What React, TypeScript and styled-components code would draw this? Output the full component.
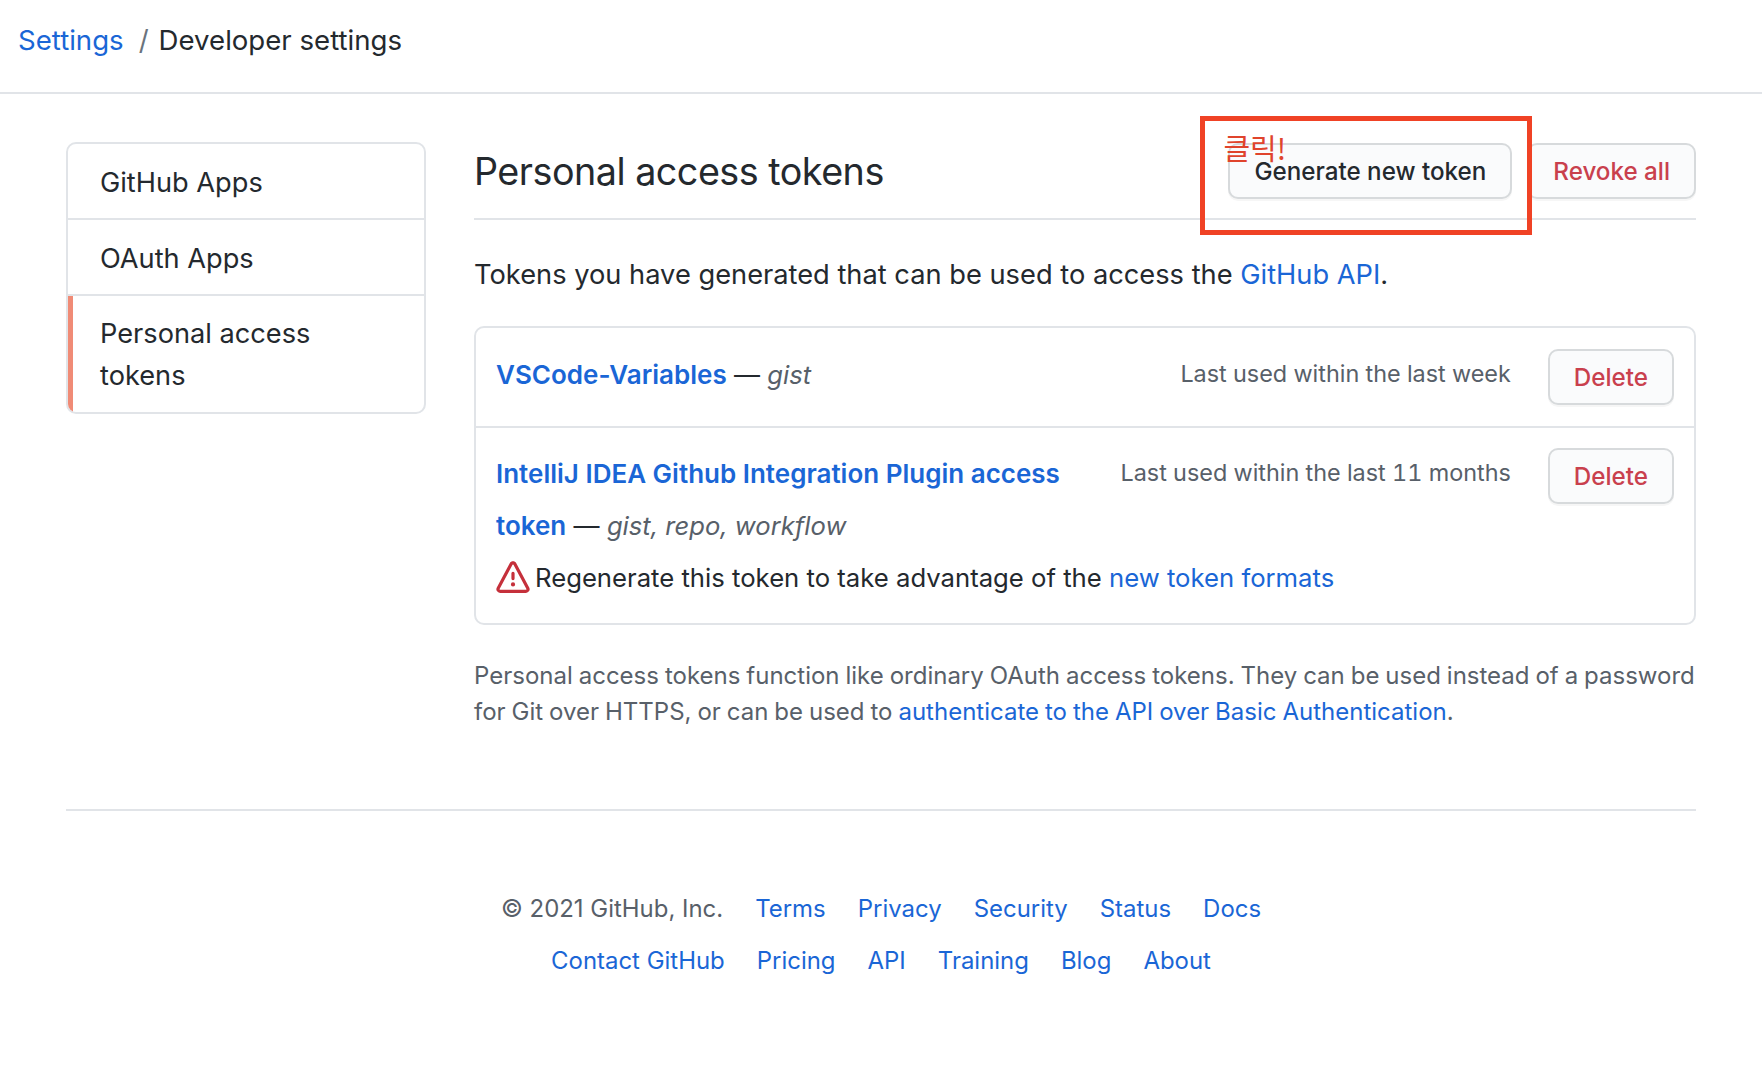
import React from "react";
import styled, { createGlobalStyle } from "styled-components";

const GlobalStyle = createGlobalStyle`
    html, body {
        margin: 0;
        padding: 0;
        background: #fff;
        color: #24292e;
        font-family: Inter, "Liberation Sans", "Noto Sans CJK KR", sans-serif;
        font-size: 25px;
    }
    a {
        color: #1a66d6;
        text-decoration: none;
    }
`;

const TopBar = styled.header`
    height: 94px;
    box-sizing: border-box;
    border-bottom: 2px solid #e1e4e8;
    padding: 0 18px 13px;
    display: flex;
    align-items: center;
    font-size: 27.6px;
`;

const Divider = styled.span`
    color: #6a737d;
    margin: 0 10px 0 15px;
`;

const Layout = styled.div`
    width: 1630px;
    margin: 48px 0 0 66px;
    display: flex;
    gap: 48px;
    align-items: flex-start;
`;

const SideMenu = styled.nav`
    width: 360px;
    flex-shrink: 0;
    box-sizing: border-box;
    border: 2px solid #e1e4e8;
    border-radius: 10px;
    overflow: hidden;
`;

const MenuItem = styled.div<{ $active?: boolean }>`
    padding: ${(p) => (p.$active ? "17px 32px 15px 27px" : "18px 32px 14px 32px")};
    line-height: 42px;
    font-size: 27.2px;
    border-bottom: 2px solid #e1e4e8;
    border-left: ${(p) => (p.$active ? "5px solid #f08b76" : "0")};
    &:last-child {
        border-bottom: 0;
    }
`;

const Main = styled.main`
    flex: 1;
    min-width: 0;
`;

const SectionHead = styled.div`
    display: flex;
    align-items: center;
    justify-content: space-between;
    box-sizing: border-box;
    height: 78px;
    border-bottom: 2px solid #e1e4e8;
    padding-bottom: 18px;
`;

const Title = styled.h2`
    margin: 0;
    font-size: 37.7px;
    font-weight: 400;
    letter-spacing: -0.5px;
`;

const HeadActions = styled.div`
    display: flex;
    gap: 15px;
    position: relative;
`;

const Button = styled.button<{ $danger?: boolean }>`
    height: 56px;
    padding: 0 24px;
    font: 500 24.2px Inter, "Liberation Sans", sans-serif;
    color: ${(p) => (p.$danger ? "#c9404d" : "#24292e")};
    background: #fafbfc;
    border: 2px solid #d7dadc;
    border-radius: 10px;
    box-shadow: 0 2px 0 rgba(27, 31, 35, 0.04);
`;

const DeleteButton = styled(Button)`
    float: right;
`;

const Callout = styled.div`
    position: absolute;
    left: -28px;
    top: -27px;
    width: 332px;
    height: 119px;
    box-sizing: border-box;
    border: 5px solid #f04225;
`;

const CalloutLabel = styled.span`
    position: absolute;
    left: 18px;
    top: 5px;
    color: #e0442c;
    font: 29px "Noto Sans CJK KR", sans-serif;
`;

const Intro = styled.p`
    margin: 34px 0 30px;
    font-size: 27.25px;
    line-height: 42px;
`;

const TokenBox = styled.div`
    border: 2px solid #e1e4e8;
    border-radius: 10px;
`;

const TokenRow = styled.div`
    display: flow-root;
    padding: 21px 20px;
    border-bottom: 2px solid #e1e4e8;
    & + & {
        padding-top: 20px;
    }
    &:last-child {
        border-bottom: 0;
    }
`;

const TokenInfo = styled.div`
    margin-bottom: -2px;
    font-size: 26px;
    line-height: 52px;
`;

const TokenName = styled.a`
    font-weight: 600;
`;

const Scopes = styled.em`
    color: #586069;
    font-size: 25.6px;
`;

const LastUsed = styled.span`
    float: right;
    white-space: nowrap;
    color: #586069;
    font-size: 23.4px;
    font-variant-numeric: tabular-nums;
    line-height: 50px;
    margin-right: 37px;
`;

const Warning = styled.div`
    display: flex;
    align-items: center;
    gap: 5px;
    font-size: 25.7px;
    svg {
        flex-shrink: 0;
    }
`;

const Note = styled.p`
    margin: 33px 0 0;
    color: #586069;
    font-size: 24px;
    word-spacing: -0.8px;
    line-height: 36px;
`;

const Footer = styled.footer`
    width: 1630px;
    margin: 79px 0 60px 66px;
    padding-top: 72px;
    border-top: 2px solid #e1e4e8;
    display: flex;
    flex-direction: column;
    align-items: center;
    font-size: 23.95px;
    line-height: 52px;
    color: #586069;
`;

const FooterRow = styled.div`
    display: flex;
    gap: 32px;
`;

const footerTop = ["Terms", "Privacy", "Security", "Status", "Docs"];
const footerBottom = ["Contact GitHub", "Pricing", "API", "Training", "Blog", "About"];

const App: React.FC = () => {
    return (
        <>
            <GlobalStyle />
            <TopBar>
                <a href="#">Settings</a>
                <Divider>/</Divider>
                <span>Developer settings</span>
            </TopBar>
            <Layout>
                <SideMenu>
                    <MenuItem>GitHub Apps</MenuItem>
                    <MenuItem>OAuth Apps</MenuItem>
                    <MenuItem $active>Personal access tokens</MenuItem>
                </SideMenu>
                <Main>
                    <SectionHead>
                        <Title>Personal access tokens</Title>
                        <HeadActions>
                            <Callout>
                                <CalloutLabel>클릭!</CalloutLabel>
                            </Callout>
                            <Button>Generate new token</Button>
                            <Button $danger>Revoke all</Button>
                        </HeadActions>
                    </SectionHead>
                    <Intro>
                        Tokens you have generated that can be used to access the <a href="#">GitHub API</a>.
                    </Intro>
                    <TokenBox>
                        <TokenRow>
                            <DeleteButton $danger>Delete</DeleteButton>
                            <LastUsed>Last used within the last week</LastUsed>
                            <TokenInfo>
                                <TokenName href="#">VSCode-Variables</TokenName> — <Scopes>gist</Scopes>
                            </TokenInfo>
                        </TokenRow>
                        <TokenRow>
                            <DeleteButton $danger>Delete</DeleteButton>
                            <LastUsed>Last used within the last 11 months</LastUsed>
                            <TokenInfo>
                                <TokenName href="#">IntelliJ IDEA Github Integration Plugin access token</TokenName> —{" "}
                                <Scopes>gist, repo, workflow</Scopes>
                                <Warning>
                                    <svg width="34" height="34" viewBox="0 0 16 16" fill="#c5303b">
                                        <path
                                            fillRule="evenodd"
                                            d="M8.22 1.754a.25.25 0 00-.44 0L1.698 13.132a.25.25 0 00.22.368h12.164a.25.25 0 00.22-.368L8.22 1.754zm-1.763-.707c.659-1.234 2.427-1.234 3.086 0l6.082 11.378A1.75 1.75 0 0114.082 15H1.918a1.75 1.75 0 01-1.543-2.575L6.457 1.047zM9 11a1 1 0 11-2 0 1 1 0 012 0zm-.25-5.25a.75.75 0 00-1.5 0v2.5a.75.75 0 001.5 0v-2.5z"
                                        />
                                    </svg>
                                    <span>
                                        Regenerate this token to take advantage of the <a href="#">new token formats</a>
                                    </span>
                                </Warning>
                            </TokenInfo>
                        </TokenRow>
                    </TokenBox>
                    <Note>
                        Personal access tokens function like ordinary OAuth access tokens. They can be used instead of a
                        password for Git over HTTPS, or can be used to{" "}
                        <a href="#">authenticate to the API over Basic Authentication</a>.
                    </Note>
                </Main>
            </Layout>
            <Footer>
                <FooterRow>
                    <span>© 2021 GitHub, Inc.</span>
                    {footerTop.map((item) => (
                        <a href="#" key={item}>
                            {item}
                        </a>
                    ))}
                </FooterRow>
                <FooterRow>
                    {footerBottom.map((item) => (
                        <a href="#" key={item}>
                            {item}
                        </a>
                    ))}
                </FooterRow>
            </Footer>
        </>
    );
};

export default App;
